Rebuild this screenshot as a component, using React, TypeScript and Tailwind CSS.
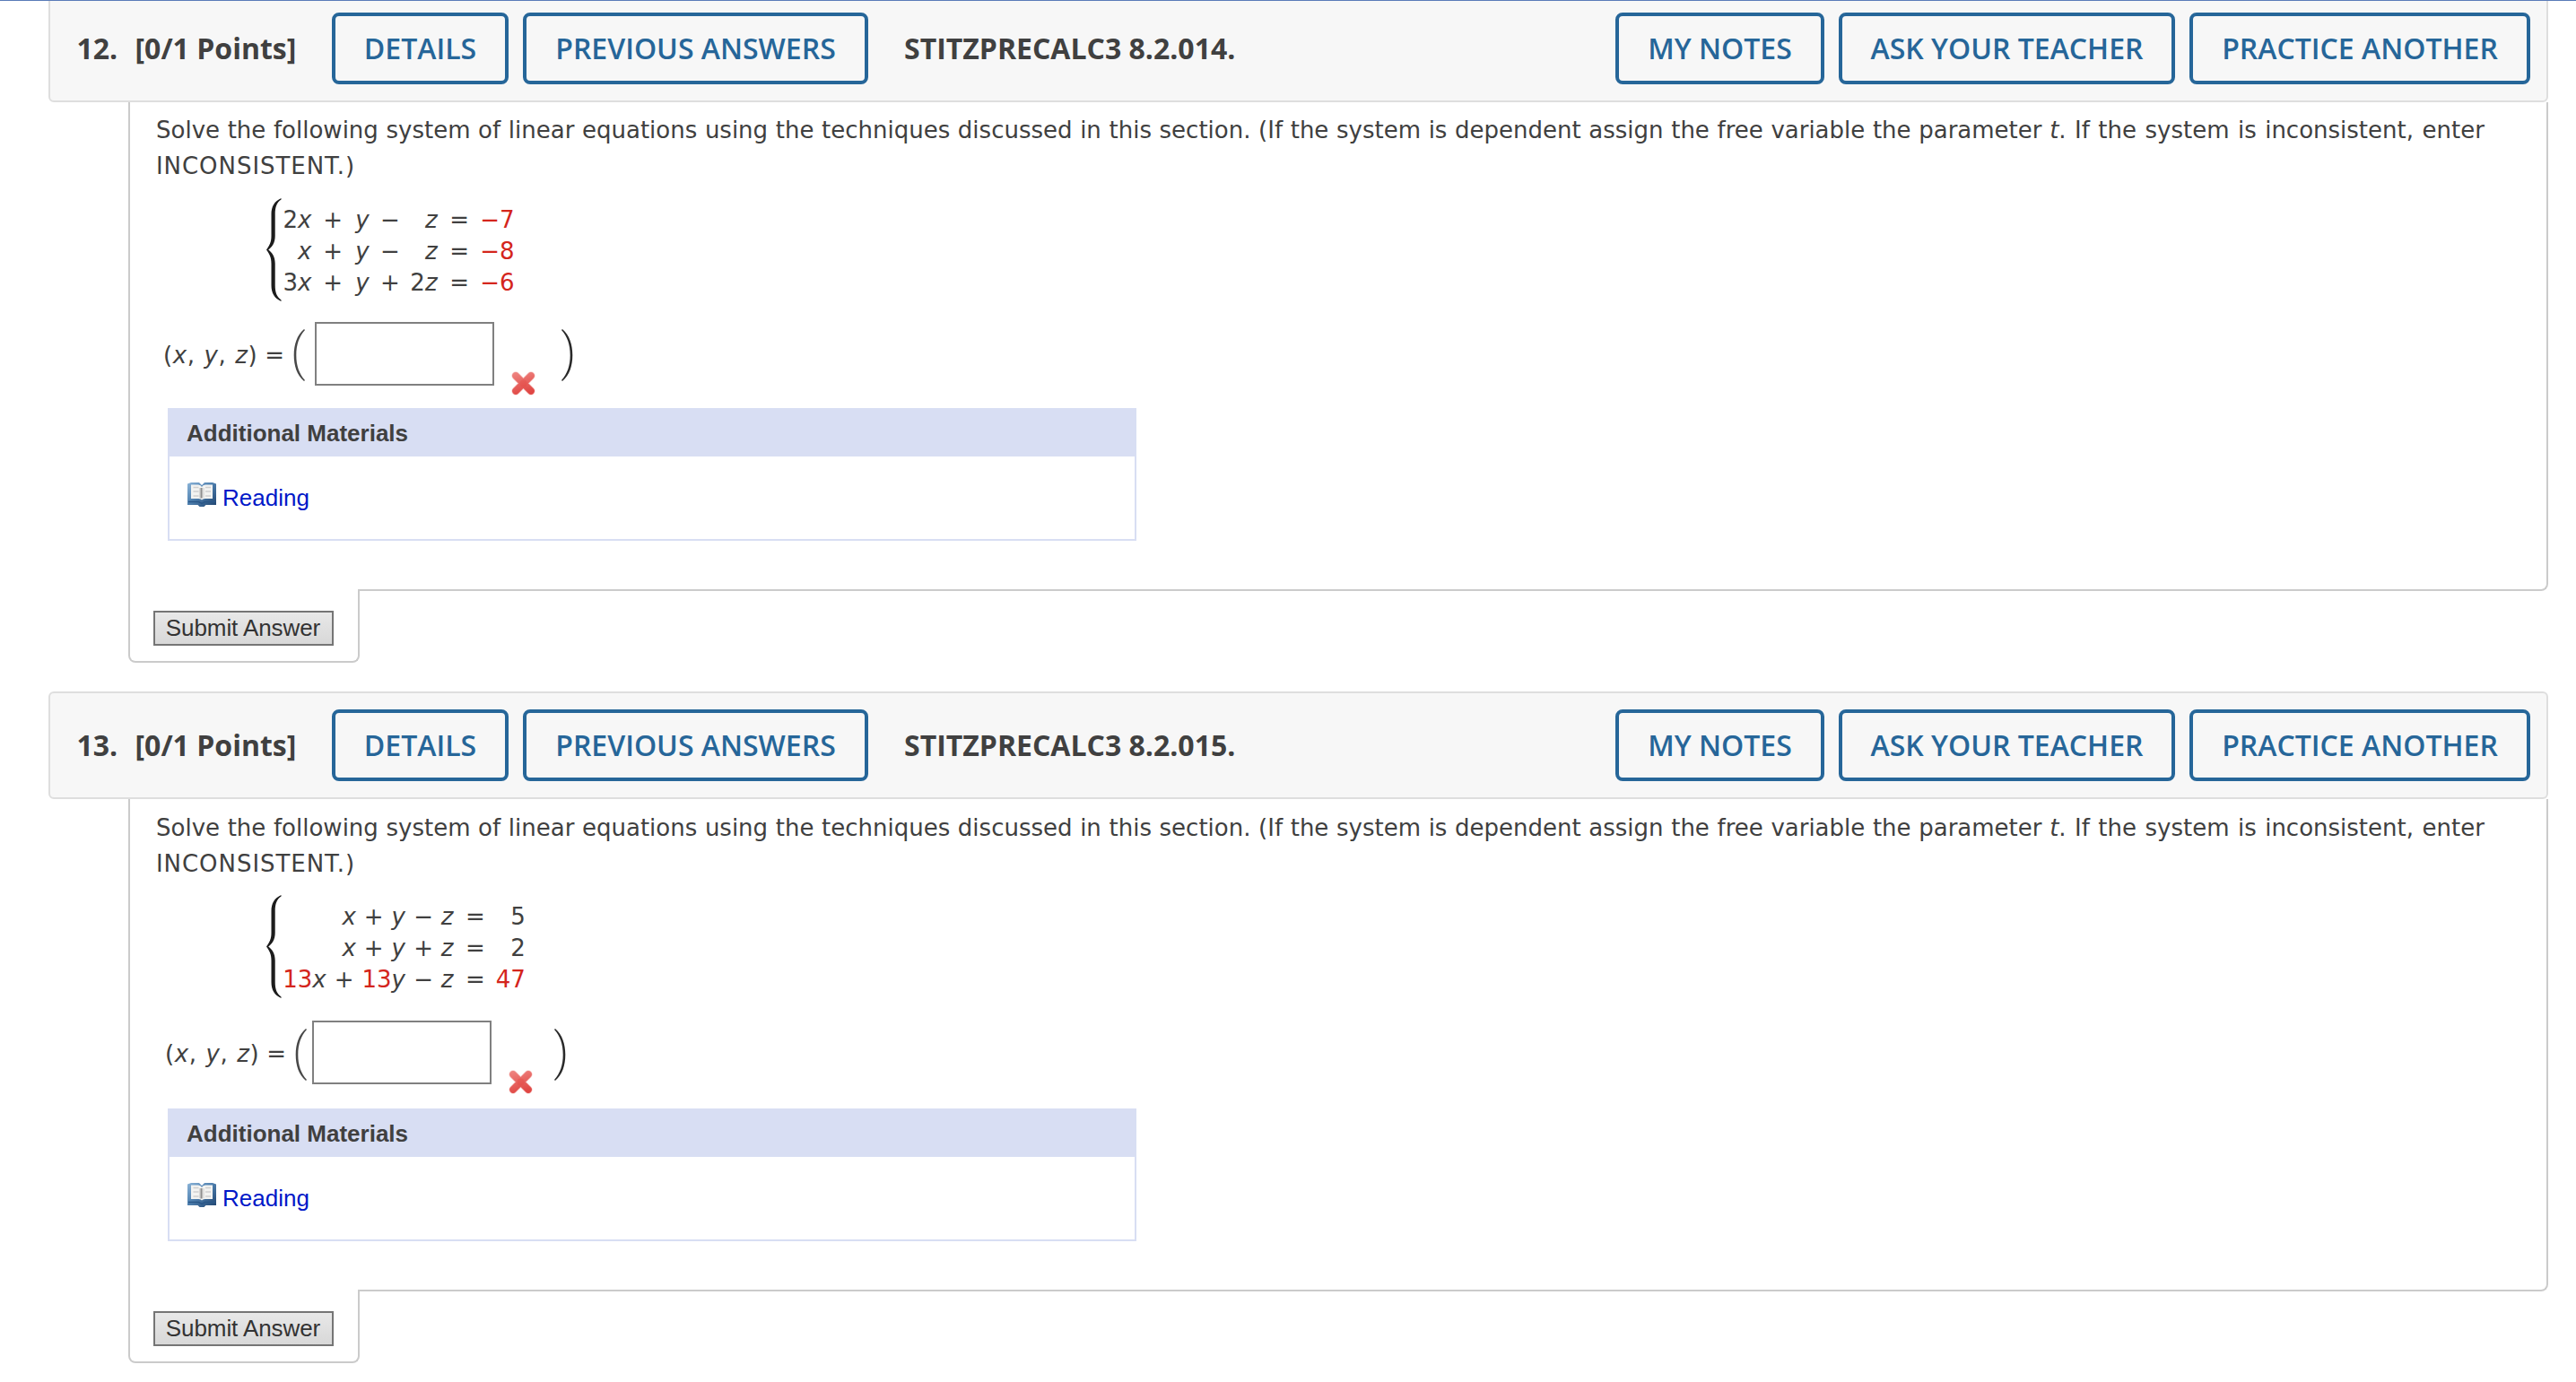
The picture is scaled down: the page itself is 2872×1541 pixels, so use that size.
import type { ReactNode } from "react";

function HeaderButton({ children, width }: { children: string; width: string }) {
  return (
    <button
      className={`${width} h-20 shrink-0 rounded-[8px] border-4 border-[#266699] text-center font-['Open_Sans',sans-serif] text-[32px] leading-[72px] font-semibold whitespace-nowrap text-[#266699]`}
    >
      {children}
    </button>
  );
}

function Brace() {
  return (
    <svg className="h-[115px] w-[18px] shrink-0" viewBox="0 0 18 115" fill="#1c1c1c">
      <path d="M16.5 0C9 3.5 5.5 9 5.5 18V42C5.5 49 3.500 52.500 0 57.500C3.500 62.500 5.500 66 5.500 73V97C5.500 106 9 111.500 16.500 115V113.400C11.500 110 9.700 105 9.700 97V73C9.700 65 6.500 61 2.200 57.500C6.500 54 9.700 50 9.700 42V18C9.700 10 11.500 5 16.500 1.600Z" />
    </svg>
  );
}

function Paren({ right = false, className }: { right?: boolean; className: string }) {
  return (
    <svg
      className={`${className} h-[58px] w-[13px] shrink-0 ${right ? "-scale-x-100" : ""}`}
      viewBox="0 0 13 58"
      fill={right ? "#2a2a2a" : "#484848"}
    >
      <path d="M12 0C4 7 0.700 17 0.700 29S4 51 12 58L13 57C6.500 50 3.300 40.500 3.300 29S6.500 8 13 1Z" />
    </svg>
  );
}

function WrongMark() {
  return (
    <svg className="mt-[55px] ml-[19px] h-[27px] w-[27px] shrink-0" viewBox="0 0 27 27">
      <defs>
        <linearGradient id="wrong" gradientUnits="userSpaceOnUse" x1="0" y1="0" x2="8" y2="27">
          <stop offset="0" stopColor="#f08a86" />
          <stop offset="1" stopColor="#e04643" />
        </linearGradient>
      </defs>
      <path d="M5 5L22 22M22 5L5 22" stroke="#f6bebc" strokeWidth="9" strokeLinecap="round" />
      <path d="M5 5L22 22M22 5L5 22" stroke="url(#wrong)" strokeWidth="7.500" strokeLinecap="round" />
      <circle cx="13.500" cy="13.500" r="4" fill="#e4453f" opacity=".35" />
    </svg>
  );
}

function BookIcon() {
  return (
    <svg className="h-[28px] w-[32px] shrink-0" viewBox="0 0 32 28">
      <defs>
        <linearGradient id="cover" x1="0" y1="0" x2="1" y2="1">
          <stop offset="0" stopColor="#8bb4d8" />
          <stop offset="0.450" stopColor="#4f80af" />
          <stop offset="1" stopColor="#1f436e" />
        </linearGradient>
      </defs>
      <path d="M0 2.500L4 1H13L16 4L19 1H28L32 2.500V26H20.500L18.500 28H13.500L11.500 26H0Z" fill="url(#cover)" />
      <path d="M1 22.500H12.500L16 24.500L19.500 22.500H31" fill="none" stroke="#2a5788" strokeWidth="1.500" />
      <path d="M4 3.500H12Q15 3.500 16 6Q17 3.500 20 3.500H28V19H19.500Q17 19 16 20.500Q15 19 12.500 19H4Z" fill="#f3f3f1" />
      <path d="M6.500 6.500H12.500M6.500 11H12.500M6.500 16H12.500M20 6.500H26M20 11H26M20 16H26" stroke="#cfcfcf" strokeWidth="1.500" />
      <path d="M15.500 7V18.500" stroke="#8f8f8f" strokeWidth="2.200" />
      <path d="M13.500 7V18M18 7V18" stroke="#d6d6d6" strokeWidth="1.200" />
    </svg>
  );
}

function Red({ children }: { children: ReactNode }) {
  return <span className="text-[#d4251c]">{children}</span>;
}

function SystemOne() {
  const rows = [
    ["2", "−", "", "−7"],
    ["", "−", "", "−8"],
    ["3", "+", "2", "−6"],
  ];
  return (
    <div className="mt-[7px] grid auto-rows-[35px] grid-cols-[32.500px_34.500px_29.700px_34.200px_41.700px_35.400px_50.500px] text-right leading-[35px]">
      {rows.map(([a, op, c, rhs]) => [
        <span key={`${rhs}a`}>{a}<i>x</i></span>,
        <span key={`${rhs}b`}>+</span>,
        <i key={`${rhs}c`}>y</i>,
        <span key={`${rhs}d`}>{op}</span>,
        <span key={`${rhs}e`}>{c}<i>z</i></span>,
        <span key={`${rhs}f`}>=</span>,
        <Red key={`${rhs}g`}>{rhs}</Red>,
      ])}
    </div>
  );
}

function SystemTwo() {
  const rows = [
    { k: "", op: "−", rhs: "5" },
    { k: "", op: "+", rhs: "2" },
    { k: "13", op: "−", rhs: <Red>47</Red> },
  ];
  return (
    <div className="mt-[7px] grid auto-rows-[35px] grid-cols-[137px_31px_22.300px_35.600px_45px] text-right leading-[35px]">
      {rows.map(({ k, op, rhs }, n) => [
        <span key={`${n}a`} className="flex justify-end gap-[9px]">
          <span><Red>{k}</Red><i>x</i></span>
          <span>+</span>
          <span><Red>{k}</Red><i>y</i></span>
        </span>,
        <span key={`${n}b`}>{op}</span>,
        <i key={`${n}c`}>z</i>,
        <span key={`${n}d`}>=</span>,
        <span key={`${n}e`}>{rhs}</span>,
      ])}
    </div>
  );
}

type Spacing = {
  text: string;
  system: string;
  answer: string;
  label: string;
  paren: string;
  input: string;
  closing: string;
  panel: string;
};

function Question({ number, code, system, s }: { number: string; code: string; system: ReactNode; s: Spacing }) {
  return (
    <section className="text-[#404040]">
      <header className="ml-[54px] flex h-[120px] w-[2787px] rounded-[6px] border-2 border-[#dedede] bg-[#f7f7f7] pt-[18px] pr-[18px] font-['Open_Sans',sans-serif] text-[32px] leading-[80px] font-bold whitespace-nowrap">
        <span className="ml-[29.500px] w-[65px]">{number}</span>
        <span className="w-[219.500px]">[0/1 Points]</span>
        <div className="flex gap-4">
          <HeaderButton width="w-[197px]">DETAILS</HeaderButton>
          <HeaderButton width="w-[385px]">PREVIOUS ANSWERS</HeaderButton>
        </div>
        <span className="ml-10">{code}</span>
        <div className="ml-auto flex gap-4">
          <HeaderButton width="w-[233px]">MY NOTES</HeaderButton>
          <HeaderButton width="w-[375px]">ASK YOUR TEACHER</HeaderButton>
          <HeaderButton width="w-[380px]">PRACTICE ANOTHER</HeaderButton>
        </div>
      </header>

      <div className="ml-[143px] w-[2698px] rounded-br-[8px] border-2 border-t-0 border-[#cbcbcb] pb-[54px] font-['DejaVu_Sans',Verdana,sans-serif] text-[26px] whitespace-nowrap">
        <p className={`${s.text} pl-[29px] leading-10`}>
          <span className="[word-spacing:0.370px]">
            Solve the following system of linear equations using the techniques discussed in this section. (If the system is dependent assign the free variable the parameter <i>t</i>
          </span>
          <span className="[word-spacing:1.200px]">. If the system is inconsistent, enter</span>
          <br />
          <span className="tracking-[0.950px]">INCONSISTENT.)</span>
        </p>

        <div className={`${s.system} ml-[152px] flex h-[115px]`}>
          <Brace />
          {system}
        </div>

        <div className={`${s.answer} flex h-[82px] items-start`}>
          <span className={`${s.label} mt-[17px] w-[136px] leading-10`}>
            <span className="tracking-[0.600px] [word-spacing:1px]">
              (<i>x</i>, <i>y</i>, <i>z</i>)
            </span>
            <span className="ml-[8px]">=</span>
          </span>
          <Paren className={`${s.paren} ml-[9px]`} />
          <input aria-label="Answer" className={`${s.input} h-[71px] w-[200px] shrink-0 border-2 border-[#808080] bg-white`} />
          <WrongMark />
          <Paren right className={`${s.paren} ${s.closing}`} />
        </div>

        <div className={`${s.panel} ml-[42px] h-[148px] w-[1080px] border-2 border-[#d8def3] font-['Liberation_Sans',Arial,sans-serif]`}>
          <h3 className="h-[52px] bg-[#d8def3] pl-[19px] leading-[53px] font-bold">Additional Materials</h3>
          <a className="flex items-start pt-[28px] pl-[20px] leading-[36px] text-[#0018c8]">
            <BookIcon />
            <span className="ml-[7px]">Reading</span>
          </a>
        </div>
      </div>

      <div className="relative -mt-0.5 ml-[143px] h-[82px] w-[258px] rounded-b-[8px] border-2 border-t-0 border-[#cbcbcb] bg-white pt-6 pl-[26px]">
        <button className="block h-[39px] w-[201px] border-2 border-[#757575] bg-linear-to-b from-[#e8e8e8] to-[#d8d8d8] pr-px text-center font-['Liberation_Sans',Arial,sans-serif] text-[26px] leading-[35px] tracking-[-0.080px] whitespace-nowrap text-[#333]">
          Submit Answer
        </button>
      </div>
    </section>
  );
}

const first: Spacing = {
  text: "pt-[11px]",
  system: "mt-4",
  answer: "mt-[23px]",
  label: "ml-[37px]",
  paren: "mt-2",
  input: "ml-[11px]",
  closing: "ml-[29px]",
  panel: "mt-[14px]",
};

const second: Spacing = {
  text: "pt-[12px]",
  system: "mt-[15px]",
  answer: "mt-[25px]",
  label: "ml-[39px]",
  paren: "mt-[9px]",
  input: "ml-[6px]",
  closing: "ml-[24px]",
  panel: "mt-4",
};

export default function App() {
  return (
    <main className="relative h-[1541px] w-[2872px] overflow-hidden bg-white">
      <div className="absolute inset-x-0 top-0 z-10 h-px bg-[#5a7bb8]" />
      <div className="-mt-1.5 flex flex-col gap-8">
        <Question number="12." code="STITZPRECALC3 8.2.014." system={<SystemOne />} s={first} />
        <Question number="13." code="STITZPRECALC3 8.2.015." system={<SystemTwo />} s={second} />
      </div>
    </main>
  );
}
